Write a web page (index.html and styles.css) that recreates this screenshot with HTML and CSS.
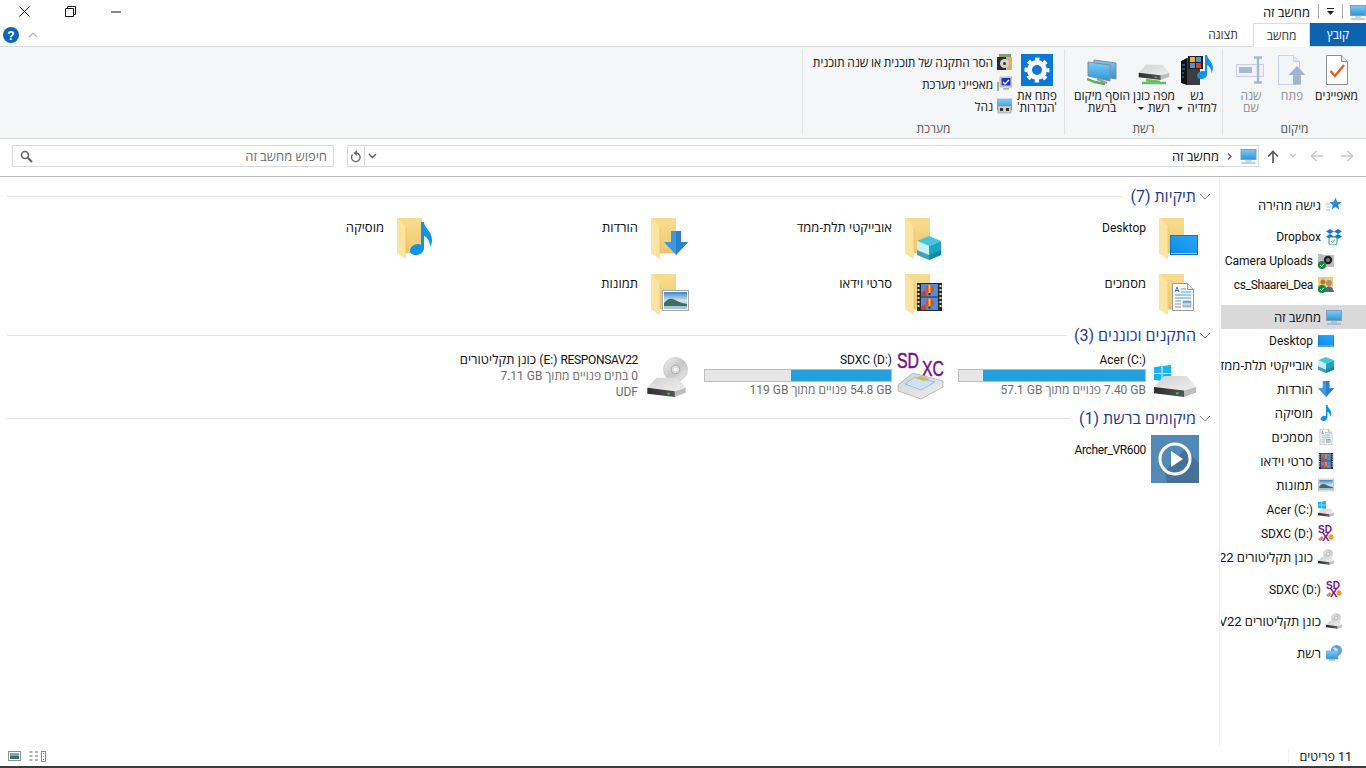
FILE: index.html
```html
<!DOCTYPE html>
<html lang="he" dir="rtl">
<head>
  <meta charset="UTF-8">
  <title>מחשב זה</title>
  <link rel="stylesheet" href="styles.css">
</head>
<body>
  <!-- shared icons -->
  <svg class="sprite" width="0" height="0" aria-hidden="true">
    <defs>
      <linearGradient id="g-folder" x1="0" y1="0" x2="0" y2="1"><stop offset="0" stop-color="#f8dd8f"/><stop offset="1" stop-color="#eec76c"/></linearGradient>
      <linearGradient id="g-screen" x1="0" y1="1" x2="1" y2="0"><stop offset="0" stop-color="#0f8be6"/><stop offset="1" stop-color="#27a8fb"/></linearGradient>
      <linearGradient id="g-pic" x1="0" y1="0" x2="0" y2="1"><stop offset="0" stop-color="#3f86c6"/><stop offset=".5" stop-color="#cfe3ef"/><stop offset="1" stop-color="#8fb6cc"/></linearGradient>
      <linearGradient id="g-drive" x1="0" y1="0" x2="1" y2="1"><stop offset="0" stop-color="#d2d2d2"/><stop offset="1" stop-color="#efefef"/></linearGradient>
      <linearGradient id="g-slot" x1="0" y1="0" x2="1" y2="0"><stop offset="0" stop-color="#2e2e2e"/><stop offset="1" stop-color="#555"/></linearGradient>
      <linearGradient id="g-mon" x1="0" y1="0" x2="0" y2="1"><stop offset="0" stop-color="#7ccbf6"/><stop offset="1" stop-color="#2d94d8"/></linearGradient>
      <linearGradient id="g-disc" x1="0" y1="0" x2="1" y2="1"><stop offset="0" stop-color="#f2f2f2"/><stop offset=".5" stop-color="#c7c7c7"/><stop offset="1" stop-color="#e9e9e9"/></linearGradient>
    </defs>
    <symbol id="folder" viewBox="0 0 48 48">
      <rect x="8" y="3" width="25" height="35" fill="url(#g-folder)"/>
      <path d="M8 3v35l9 6V12z" fill="#fde8a6"/>
      <path d="M8 3h1l8 9v32l-9-6z" fill="#fbe3a0"/>
      <path d="M17 12v26h16" fill="none" stroke="#e6bd62" stroke-width=".6"/>
    </symbol>
    <symbol id="i-screen" viewBox="0 0 28 20">
      <rect width="28" height="20" fill="#0b76c8"/>
      <rect x="1" y="1" width="26" height="17" fill="url(#g-screen)"/>
      <path d="M1 18h26v1H1z" fill="#e4f3ff" opacity=".7"/>
    </symbol>
    <symbol id="i-cube" viewBox="0 0 24 24">
      <path d="M12 0l12 5-12 5L0 5z" fill="#46c6dc"/>
      <path d="M0 5l12 5v14L0 19z" fill="#c9f0f4"/>
      <path d="M24 5l-12 5v14l12-5z" fill="#1ba6c2"/>
      <path d="M0 14l12 5 12-5v5l-12 5-12-5z" fill="#0e7f99" opacity=".7"/>
    </symbol>
    <symbol id="i-arrow" viewBox="0 0 24 24">
      <path d="M7 0h10v11h7L12 24 0 11h7z" fill="#3d97e4"/>
      <path d="M12 24L24 11h-7V0h-5z" fill="#2a80cd"/>
    </symbol>
    <symbol id="i-note" viewBox="0 0 22 33">
      <path d="M11 0h3c0 6 8 9 8 18 0 3-1 5-2 7 0-6-3-10-6-11v12c0 4-4 7-8 7-4 0-6-2-6-4 0-4 4-7 8-7 1 0 2 0 3 1z" fill="#0f95e6"/>
    </symbol>
    <symbol id="i-doc" viewBox="0 0 22 28">
      <path d="M.5.5h15l6 6v21H.5z" fill="#fff" stroke="#9b9b9b"/>
      <path d="M15.500.500v6h6" fill="#e8e8e8" stroke="#9b9b9b"/>
      <path d="M3 9l2-5 2 5M4 7.500h2" fill="none" stroke="#2b7cd3"/>
      <path d="M9 6h5M9 9h10M3 12h16M3 15h16" stroke="#3f9ae0"/>
      <path d="M3 18h6M3 21h6M3 24h6" stroke="#8d8d8d"/>
      <rect x="11" y="18" width="8" height="6" fill="url(#g-pic)" stroke="#999" stroke-width=".6"/>
    </symbol>
    <symbol id="i-film" viewBox="0 0 25 28">
      <rect width="25" height="28" fill="#2a2a2a"/>
      <path d="M1.500 2v24M23.500 2v24" stroke="#ddd" stroke-width="2" stroke-dasharray="2 2"/>
      <rect x="4" y="1" width="17" height="12.500" fill="#4c8fe0"/>
      <rect x="4" y="14.500" width="17" height="12.500" fill="#4c8fe0"/>
      <circle cx="12.500" cy="6" r="4" fill="#e2462e"/><path d="M12.500 2v8" stroke="#f6c42b" stroke-width="2"/>
      <path d="M11.500 10h2v2h-2z" fill="#3a2a1a"/>
      <circle cx="12.500" cy="19.500" r="4" fill="#e2462e"/><path d="M12.500 15.500v8" stroke="#f6c42b" stroke-width="2"/>
      <path d="M11.500 23.500h2v2h-2z" fill="#3a2a1a"/>
      <path d="M4 10l4-3 2 6H4zM4 24l4-3 2 6H4z" fill="#c9402f"/>
    </symbol>
    <symbol id="i-pic" viewBox="0 0 27 21">
      <rect x=".5" y=".5" width="26" height="20" fill="#fff" stroke="#a8a8a8"/>
      <rect x="2" y="2" width="23" height="17" fill="url(#g-pic)"/>
      <path d="M2 13c3-4 6-5 9-4s5 3 9 4l5 1v2H2z" fill="#3f6e60"/>
      <path d="M2 16h23v3H2z" fill="#a6c5d6"/>
    </symbol>
    <symbol id="drive" viewBox="0 0 46 24">
      <path d="M0 13L11 1h25l10 12-13 4z" fill="url(#g-drive)"/>
      <path d="M33 17l13-4v6l-13 5z" fill="#bdbdbd"/>
      <path d="M0 13l33 4v7L0 20z" fill="url(#g-slot)"/>
      <rect x="24" y="19" width="3" height="2" fill="#35d457"/>
    </symbol>
    <symbol id="winlogo" viewBox="0 0 18 18">
      <path d="M0 2.500l8-1.500v7.500H0zM9 1l9-1v8.500H9zM0 9.500h8V17l-8-1.200zM9 9.500h9V18l-9-1z" fill="#19b4f0"/>
    </symbol>
    <symbol id="disc" viewBox="0 0 26 26">
      <circle cx="13" cy="13" r="12.500" fill="url(#g-disc)" stroke="#b5b5b5" stroke-width=".5"/>
      <circle cx="13" cy="13" r="4.500" fill="#dcdcdc" stroke="#a9a9a9"/>
      <circle cx="13" cy="13" r="1.800" fill="#fff"/>
    </symbol>
    <symbol id="monitor" viewBox="0 0 16 16">
      <rect x=".5" y="1.500" width="15" height="10" fill="url(#g-mon)" stroke="#7f9fb8"/>
      <path d="M5 12.500h6v1H5z" fill="#9aa7b1"/>
      <path d="M1 14.500h14v1H1z" fill="#7f9fb8"/>
    </symbol>
    <symbol id="badge" viewBox="0 0 8 8">
      <circle cx="4" cy="4" r="4" fill="#0c8a43"/>
      <path d="M2 4l1.500 1.500L6 2.800" fill="none" stroke="#fff"/>
    </symbol>
    <symbol id="disc-drive-small" viewBox="0 0 16 16">
      <use href="#disc" x="5" y="0" width="10" height="10"/>
      <use href="#drive" x="0" y="7" width="16" height="9"/>
    </symbol>
  </svg>

  <div class="titlebar">
    <svg class="title-icon" width="16" height="16"><use href="#monitor"/></svg>
    <span class="title-sep"></span>
    <svg class="title-menu" width="9" height="8" viewBox="0 0 9 8"><path d="M1 0h7v1H1zM1 3h7L4.500 7z" fill="#222"/></svg>
    <span class="title-sep"></span>
    <span class="title-text">מחשב זה</span>
    <div class="win-controls">
      <button class="win-btn" type="button"><svg width="11" height="2" viewBox="0 0 11 2"><path d="M0 1h10" stroke="#111"/></svg></button>
      <button class="win-btn" type="button"><svg width="11" height="11" viewBox="0 0 11 11"><path d="M2.500 2.500V.5h8v8h-2M.5 2.500h8v8h-8z" fill="none" stroke="#111"/></svg></button>
      <button class="win-btn" type="button"><svg width="11" height="11" viewBox="0 0 11 11"><path d="M.5.500l10 10M10.500.500l-10 10" stroke="#111"/></svg></button>
    </div>
  </div>

  <div class="tabs">
    <div class="tab tab-file">קובץ</div>
    <div class="tab tab-active">מחשב</div>
    <div class="tab">תצוגה</div>
    <div class="tabs-end">
      <svg width="10" height="6" viewBox="0 0 10 6"><path d="M1 5l4-4 4 4" fill="none" stroke="#b5b5b5" stroke-width="1.200"/></svg>
      <svg class="help" width="16" height="16" viewBox="0 0 16 16"><circle cx="8" cy="8" r="8" fill="#0f66b5"/><text x="8" y="12.500" class="help-mark">?</text></svg>
    </div>
  </div>

  <section class="ribbon">
    <div class="group group-location">
      <div class="group-tools">
        <div class="tool tool-props">
          <svg width="22" height="30" viewBox="0 0 22 30"><path d="M.5.500h15l6 6v23H.5z" fill="#fff" stroke="#8e8e8e"/><path d="M15.500.500v6h6" fill="#eee" stroke="#8e8e8e"/><path d="M4.500 16l4.500 5 9-11" fill="none" stroke="#ee5a1e" stroke-width="2.400"/></svg>
          <span>מאפיינים</span>
        </div>
        <div class="tool tool-open is-off">
          <svg width="28" height="30" viewBox="0 0 28 30"><path d="M.5.500h15l6 6v23H.5z" fill="#f2f6fb" stroke="#c8d4e4"/><path d="M15.500.500v6h6" fill="#dfe7f1" stroke="#c8d4e4"/><path d="M19 11l8.500 9H23v9.500h-8V20h-4.500z" fill="#a4b5cc"/></svg>
          <span>פתח</span>
        </div>
        <div class="tool tool-rename is-off">
          <svg width="30" height="30" viewBox="0 0 30 30"><rect x=".5" y="9.500" width="27" height="12" fill="#eef2f7" stroke="#c8d2df"/><rect x="3" y="12" width="13" height="6" fill="#a9bad0"/><path d="M18 2.500h8M18 27.500h8M22 3v24" stroke="#a9bad0" stroke-width="2.400"/></svg>
          <span>שנה<br>שם</span>
        </div>
      </div>
      <div class="group-label">מיקום</div>
    </div>

    <div class="group group-network">
      <div class="group-tools">
        <div class="tool tool-media">
          <svg width="32" height="30" viewBox="0 0 32 30"><path d="M0 6l6-3v27l-6-2z" fill="#111"/><path d="M6 3l13 2v25H6z" fill="#3a3d42"/><path d="M1 10h3M1 14h3M1 18h2M1 22h2" stroke="#2d90e0"/><rect x="7" y="1" width="15" height="13" fill="#222"/><rect x="9" y="2" width="5" height="5" fill="#e8b531"/><rect x="15" y="2" width="5" height="5" fill="#4f94db"/><rect x="9" y="8" width="5" height="5" fill="#4f94db"/><rect x="15" y="8" width="5" height="5" fill="#d9432e"/><use href="#i-note" x="16" y="0" width="16" height="24"/></svg>
          <span>גש<br>למדיה<i class="caret"></i></span>
        </div>
        <div class="tool tool-map">
          <svg width="32" height="30" viewBox="0 0 32 30"><use href="#drive" x="0" y="9" width="32" height="16"/><path d="M8 25l14 2M4 28h24" stroke="#63c063" stroke-width="2.400"/></svg>
          <span>מפה כונן<br>רשת<i class="caret"></i></span>
        </div>
        <div class="tool tool-add">
          <svg width="30" height="30" viewBox="0 0 30 30"><path d="M7 5l22 3v16L7 20z" fill="url(#g-mon)" stroke="#7c8e9b"/><path d="M1 7l22 3v16L1 21z" fill="url(#g-mon)" stroke="#7c8e9b"/><path d="M0 24l8 3 10 2" stroke="#4eb54e" stroke-width="2.400" fill="none"/><path d="M10 24l10 4" stroke="#9a9a9a" stroke-width="2"/></svg>
          <span>הוסף מיקום<br>ברשת</span>
        </div>
      </div>
      <div class="group-label">רשת</div>
    </div>

    <div class="group group-system">
      <div class="group-tools">
        <div class="tool tool-settings">
          <svg width="32" height="32" viewBox="0 0 32 32"><rect width="32" height="32" fill="#0a78d7"/><circle cx="16" cy="16" r="7.500" fill="none" stroke="#fff" stroke-width="5"/><circle cx="16" cy="16" r="11" fill="none" stroke="#fff" stroke-width="3" stroke-dasharray="4.320 4.320" stroke-dashoffset="2.160"/></svg>
          <span>פתח את<br>'הגדרות'</span>
        </div>
        <ul class="small-tools">
          <li>
            <svg width="15" height="16" viewBox="0 0 15 16"><rect x="2" y="0" width="12" height="4" fill="#8a9a78"/><rect y="3" width="15" height="13" fill="#2b2b2b"/><rect x="9" y="3" width="6" height="13" fill="#d8b26a"/><circle cx="7.500" cy="9.500" r="4.500" fill="#d5d5d5"/><circle cx="7.500" cy="9.500" r="1.500" fill="#333"/></svg>
            <span>הסר התקנה של תוכנית או שנה תוכנית</span>
          </li>
          <li>
            <svg width="15" height="16" viewBox="0 0 15 16"><rect x="3" y="1" width="12" height="10" fill="#ddd" stroke="#999" stroke-width=".6"/><rect x="4.500" y="2" width="9" height="7.500" fill="#1f35c9"/><path d="M6 6l2 2 4-4" fill="none" stroke="#fff" stroke-width="1.300"/><rect y="6" width="2" height="9" fill="#9bb18a"/><path d="M6 12h6v1.500H6z" fill="#aaa"/></svg>
            <span>מאפייני מערכת</span>
          </li>
          <li>
            <svg width="15" height="16" viewBox="0 0 15 16"><rect y="1" width="15" height="11" fill="url(#g-mon)" stroke="#8caabd" stroke-width=".6"/><rect x="1" y="8" width="13" height="7" fill="#cfcfcf" stroke="#888" stroke-width=".5"/><rect x="3" y="10" width="3" height="3" fill="#333"/><rect x="9" y="10" width="3" height="3" fill="#333"/></svg>
            <span>נהל</span>
          </li>
        </ul>
      </div>
      <div class="group-label">מערכת</div>
    </div>
  </section>

  <div class="addressbar">
    <div class="nav-arrows">
      <svg width="14" height="12" viewBox="0 0 14 12"><path d="M1 6h11M7.500 1l5 5-5 5" fill="none" stroke="#c9c9c9" stroke-width="1.600"/></svg>
      <svg class="nav-back" width="14" height="12" viewBox="0 0 14 12"><path d="M13 6H2M6.500 1l-5 5 5 5" fill="none" stroke="#c9c9c9" stroke-width="1.600"/></svg>
      <svg class="nav-recent" width="8" height="6" viewBox="0 0 8 6"><path d="M1 1l3 3 3-3" fill="none" stroke="#c9c9c9" stroke-width="1.200"/></svg>
      <svg class="nav-up" width="12" height="13" viewBox="0 0 12 13"><path d="M6 13V2M1 6.500L6 1.500l5 5" fill="none" stroke="#5c5c5c" stroke-width="1.700"/></svg>
    </div>
    <div class="address">
      <svg class="address-pc" width="17" height="16"><use href="#monitor"/></svg>
      <svg class="address-chevron" width="5" height="7" viewBox="0 0 5 7"><path d="M1 .5l3 3-3 3" fill="none" stroke="#555" stroke-width="1.200"/></svg>
      <span class="crumb">מחשב זה</span>
      <div class="address-end">
        <span class="address-drop"><svg width="9" height="6" viewBox="0 0 9 6"><path d="M1 1l3.500 3.500L8 1" fill="none" stroke="#555" stroke-width="1.400"/></svg></span>
        <span class="address-refresh"><svg width="12" height="13" viewBox="0 0 12 13"><path d="M2.500 4.500A4.300 4.300 0 1 0 6.500 3H4.800M7 .6L4.600 3 7 5.400" fill="none" stroke="#666" stroke-width="1.300"/></svg></span>
      </div>
    </div>
    <div class="search">
      <span>חיפוש מחשב זה</span>
      <svg width="13" height="13" viewBox="0 0 13 13"><circle cx="5" cy="5" r="3.500" fill="none" stroke="#666" stroke-width="1.600"/><path d="M7.800 7.800L12 12" stroke="#666" stroke-width="2.200"/></svg>
    </div>
  </div>

  <div class="explorer">
    <aside class="navpane">
      <div class="nav-list">
        <div class="nav-row"><svg width="16" height="16" viewBox="0 0 16 16"><path d="M9.500.5l1.700 4.200 4.500.3-3.500 3 1.100 4.500-3.800-2.400-3.800 2.400L6.800 8 3.300 5l4.500-.3z" fill="#2a8ad4"/><path d="M0 7h4M1 10h4M0 13h4" stroke="#8cc3ea"/></svg><span>גישה מהירה</span></div>
        <div class="nav-gap"></div>
        <div class="nav-row"><svg width="16" height="16" viewBox="0 0 16 16"><path d="M4 0l4 2.500L4 5 0 2.500zM12 0l4 2.500L12 5 8 2.500zM4 5l4 2.500L4 10 0 7.500zM12 5l4 2.500L12 10 8 7.500z" fill="#1c74d6"/><rect x="3" y="8" width="8" height="8" rx="2" fill="#fff" stroke="#2e9a5e"/><path d="M5 12l1.500 1.500L9 10.500" fill="none" stroke="#2e9a5e"/></svg><span class="lat">Dropbox</span></div>
        <div class="nav-row nav-sub"><svg width="16" height="16" viewBox="0 0 16 16"><path d="M0 1h4l1 1h11v12H0z" fill="#bdbdbd"/><circle cx="10" cy="7" r="4.200" fill="#222"/><circle cx="10" cy="7" r="2" fill="#6f7f8e"/><use href="#badge" x="0" y="8" width="8" height="8"/></svg><span class="lat">Camera Uploads</span></div>
        <div class="nav-row nav-sub"><svg width="16" height="16" viewBox="0 0 16 16"><rect y="0" width="15" height="15" fill="#f0cf72"/><circle cx="5" cy="5" r="2.500" fill="#a57c52"/><circle cx="11" cy="6" r="3" fill="#b78a68"/><path d="M7 15c0-4 2-5.500 4-5.500s4 1.500 5 5.500z" fill="#4a6b8c"/><use href="#badge" x="0" y="8" width="8" height="8"/></svg><span class="lat lat-tight">cs_Shaarei_Dea</span></div>
        <div class="nav-gap"></div>
        <div class="nav-row is-selected"><svg width="16" height="16"><use href="#monitor"/></svg><span>מחשב זה</span></div>
        <div class="nav-row nav-sub"><svg width="16" height="16"><use href="#i-screen"/></svg><span class="lat">Desktop</span></div>
        <div class="nav-row nav-sub"><svg width="16" height="16"><use href="#i-cube"/></svg><span>אובייקטי תלת-ממד</span></div>
        <div class="nav-row nav-sub"><svg width="16" height="16"><use href="#i-arrow"/></svg><span>הורדות</span></div>
        <div class="nav-row nav-sub"><svg width="16" height="16"><use href="#i-note"/></svg><span>מוסיקה</span></div>
        <div class="nav-row nav-sub"><svg width="16" height="16"><use href="#i-doc"/></svg><span>מסמכים</span></div>
        <div class="nav-row nav-sub"><svg width="16" height="16"><use href="#i-film"/></svg><span>סרטי וידאו</span></div>
        <div class="nav-row nav-sub"><svg width="16" height="16"><use href="#i-pic"/></svg><span>תמונות</span></div>
        <div class="nav-row nav-sub"><svg width="16" height="16" viewBox="0 0 16 16"><use href="#winlogo" x="0" y="0" width="8" height="8"/><use href="#drive" x="0" y="7" width="16" height="9"/></svg><span><bdi>Acer (C:)</bdi></span></div>
        <div class="nav-row nav-sub"><svg width="16" height="18" viewBox="0 0 16 18"><text x="0" y="9" class="sd-mini" textLength="14" lengthAdjust="spacingAndGlyphs">SD</text><text x="4" y="17" class="sd-mini">X</text><path d="M0 15l4-3 2 3-4 2z" fill="#a9a26a"/><path d="M13 10v6M10 13h6M11 11l4 4M15 11l-4 4" stroke="#f39426" stroke-width="1.200"/></svg><span><bdi>SDXC (D:)</bdi></span></div>
        <div class="nav-row nav-sub"><svg width="16" height="16"><use href="#disc-drive-small"/></svg><span>כונן תקליטורים RESPONSAV22</span></div>
        <div class="nav-gap"></div>
        <div class="nav-row"><svg width="16" height="18" viewBox="0 0 16 18"><text x="0" y="9" class="sd-mini" textLength="14" lengthAdjust="spacingAndGlyphs">SD</text><text x="4" y="17" class="sd-mini">X</text><path d="M0 15l4-3 2 3-4 2z" fill="#a9a26a"/><path d="M13 10v6M10 13h6M11 11l4 4M15 11l-4 4" stroke="#f39426" stroke-width="1.200"/></svg><span><bdi>SDXC (D:)</bdi></span></div>
        <div class="nav-gap"></div>
        <div class="nav-row"><svg width="16" height="16"><use href="#disc-drive-small"/></svg><span>כונן תקליטורים RESPONSAV22</span></div>
        <div class="nav-gap"></div>
        <div class="nav-row"><svg width="16" height="16" viewBox="0 0 16 16"><circle cx="10.500" cy="5.500" r="5.500" fill="#5ba3dc"/><path d="M7 3c2-1 4 0 5 2s-1 3-3 2z" fill="#cfe6f7"/><rect x="0" y="6" width="12" height="8" fill="url(#g-mon)" stroke="#7f9fb8" stroke-width=".6"/><path d="M3 15h6" stroke="#7f9fb8"/></svg><span>רשת</span></div>
      </div>
    </aside>

    <main class="content">
      <div class="group-head">
        <svg width="12" height="7" viewBox="0 0 12 7"><path d="M1 1l5 5 5-5" fill="none" stroke="#8a8a8a"/></svg>
        <h2>תיקיות (7)</h2>
        <span class="head-line"></span>
      </div>
      <div class="tiles">
        <div class="tile"><svg width="48" height="48" viewBox="0 0 48 48"><use href="#folder"/><use href="#i-screen" x="19" y="20" width="28" height="20"/></svg><span class="tile-name lat">Desktop</span></div>
        <div class="tile"><svg width="48" height="48" viewBox="0 0 48 48"><use href="#folder"/><use href="#i-cube" x="20" y="21" width="24" height="24"/></svg><span class="tile-name">אובייקטי תלת-ממד</span></div>
        <div class="tile"><svg width="48" height="48" viewBox="0 0 48 48"><use href="#folder"/><use href="#i-arrow" x="21" y="16" width="24" height="24"/></svg><span class="tile-name">הורדות</span></div>
        <div class="tile"><svg width="48" height="48" viewBox="0 0 48 48"><use href="#folder"/><use href="#i-note" x="21" y="7" width="22" height="33"/></svg><span class="tile-name">מוסיקה</span></div>
        <div class="tile"><svg width="48" height="48" viewBox="0 0 48 48"><use href="#folder"/><use href="#i-doc" x="21" y="12" width="22" height="28"/></svg><span class="tile-name">מסמכים</span></div>
        <div class="tile"><svg width="48" height="48" viewBox="0 0 48 48"><use href="#folder"/><use href="#i-film" x="20" y="12" width="25" height="28"/></svg><span class="tile-name">סרטי וידאו</span></div>
        <div class="tile"><svg width="48" height="48" viewBox="0 0 48 48"><use href="#folder"/><use href="#i-pic" x="19" y="19" width="27" height="21"/></svg><span class="tile-name">תמונות</span></div>
      </div>

      <div class="group-head head-devices">
        <svg width="12" height="7" viewBox="0 0 12 7"><path d="M1 1l5 5 5-5" fill="none" stroke="#8a8a8a"/></svg>
        <h2>התקנים וכוננים (3)</h2>
        <span class="head-line"></span>
      </div>
      <div class="tiles tiles-drives">
        <div class="tile">
          <svg width="48" height="48" viewBox="0 0 48 48"><use href="#winlogo" x="3" y="16" width="17" height="17"/><use href="#drive" x="3" y="26" width="42" height="22"/></svg>
          <div class="drive-info">
            <div class="drive-name"><bdi>Acer (C:)</bdi></div>
            <div class="bar"><div class="bar-fill" style="width: 87%"></div></div>
            <div class="drive-sub"><bdi>7.40 GB</bdi> פנויים מתוך <bdi>57.1 GB</bdi></div>
          </div>
        </div>
        <div class="tile">
          <svg class="sd-icon" width="48" height="48" viewBox="0 0 48 48"><text x="0" y="19" class="sd-big" textLength="22" lengthAdjust="spacingAndGlyphs">SD</text><text x="25" y="27" class="sd-big" textLength="22" lengthAdjust="spacingAndGlyphs">XC</text><path d="M1 36l15-12 30 8v6L24 50 1 42z" fill="url(#g-drive)" stroke="#a5a5a5" stroke-width=".7"/><path d="M8 35l10-7 20 5-14 8z" fill="#cfe2f3" stroke="#7ba5c9" stroke-width=".6"/><path d="M18 29l6-2 9 3-6 2z" fill="#c7ba6e"/></svg>
          <div class="drive-info">
            <div class="drive-name"><bdi>SDXC (D:)</bdi></div>
            <div class="bar"><div class="bar-fill" style="width: 54%"></div></div>
            <div class="drive-sub"><bdi>54.8 GB</bdi> פנויים מתוך <bdi>119 GB</bdi></div>
          </div>
        </div>
        <div class="tile">
          <svg width="48" height="48" viewBox="0 0 48 48"><use href="#disc" x="20" y="8" width="25" height="25"/><use href="#drive" x="2" y="28" width="43" height="20"/></svg>
          <div class="drive-info">
            <div class="drive-name"><bdi class="lat-tight">RESPONSAV22</bdi> <bdi>(E:)</bdi> כונן תקליטורים</div>
            <div class="drive-sub">0 בתים פנויים מתוך <bdi>7.11 GB</bdi></div>
            <div class="drive-sub">UDF</div>
          </div>
        </div>
      </div>

      <div class="group-head head-network">
        <svg width="12" height="7" viewBox="0 0 12 7"><path d="M1 1l5 5 5-5" fill="none" stroke="#8a8a8a"/></svg>
        <h2>מיקומים ברשת (1)</h2>
        <span class="head-line"></span>
      </div>
      <div class="tiles tiles-net">
        <div class="tile">
          <svg width="48" height="48" viewBox="0 0 48 48"><rect width="48" height="48" fill="#5389b6"/><path d="M48 48H16L14 36l20-22 14 14z" fill="#467097"/><circle cx="24" cy="24" r="15" fill="none" stroke="#fff" stroke-width="3"/><path d="M20 16l12 8-12 8z" fill="#fff"/></svg>
          <span class="tile-name lat lat-tight">Archer_VR600</span>
        </div>
      </div>
    </main>
  </div>

  <footer class="statusbar">
    <span class="status-count">11 פריטים</span>
    <span class="status-sep"></span>
    <div class="view-btns">
      <svg width="17" height="11" viewBox="0 0 17 11"><path d="M.5 5h3M.5 1h3M.5 9h3M6 1h3M6 5h3M6 9h3" stroke="#666"/><rect x="12.500" y=".5" width="4" height="10" fill="#fff" stroke="#888"/><path d="M14 2h1v1h-1z" fill="#4a90d9"/><path d="M14 5h1v1h-1z" fill="#49b35f"/><path d="M14 8h1v1h-1z" fill="#d9534a"/></svg>
      <svg width="13" height="10" viewBox="0 0 13 10"><rect x=".5" y=".5" width="12" height="9" fill="#fff" stroke="#8e8e8e"/><rect x="2" y="2" width="9" height="3" fill="#6fa6d4"/><rect x="2" y="5" width="9" height="3" fill="#3f6e60"/></svg>
    </div>
  </footer>
  <div class="bottom-strip"></div>
</body>
</html>
```

FILE: styles.css
```css
* {
  box-sizing: border-box;
}

html, body {
  height: 100%;
}

body {
  margin: 0;
  display: flex;
  flex-direction: column;
  height: 768px;
  overflow: hidden;
  background: white;
  color: #111;
  font-family: Roboto, "Open Sans", "Liberation Sans", sans-serif;
  font-size: 12px;
}

svg {
  display: block;
  flex: none;
}

.sprite {
  flex: none;
}

.sd-icon {
  overflow: visible;
}

.sd-mini {
  font: bold 11px "Liberation Sans", sans-serif;
  fill: #7b1488;
  direction: ltr;
}

.help-mark {
  font: bold 12px "Liberation Sans", sans-serif;
  fill: white;
  text-anchor: middle;
}

.sd-big {
  font: 22px "Liberation Sans", sans-serif;
  fill: #7b0f86;
  stroke: #7b0f86;
  stroke-width: 0.5px;
  direction: ltr;
}

/* latin labels run a little smaller than the hebrew ones */
.lat,
bdi {
  font-size: 12px;
}

.lat-tight {
  letter-spacing: -0.35px;
}

/* title bar */
.titlebar {
  display: flex;
  align-items: center;
  height: 23px;
  flex: none;
}

.title-sep {
  width: 1px;
  height: 15px;
  background: #a8a8a8;
  margin: 0 7px;
}

.title-text {
  padding-right: 1px;
  font-size: 13px;
}

.win-controls {
  display: flex;
  gap: 1px;
  margin-right: auto;
  padding-left: 2px;
}

.win-btn {
  width: 45px;
  height: 20px;
  border: 0;
  padding: 0;
  background: none;
  display: flex;
  align-items: center;
  justify-content: center;
}

/* tabs */
.tabs {
  display: flex;
  height: 23px;
  flex: none;
  position: relative;
  z-index: 1;
}

.tab {
  width: 60px;
  display: flex;
  align-items: center;
  justify-content: center;
  color: #333;
}

.tab-file {
  width: 56px;
  background: #0e63b0;
  color: white;
}

.tab-active {
  width: 57px;
  height: 24px;
  background: white;
  border: 1px solid #dadbdc;
  border-bottom: 0;
}

.tabs-end {
  display: flex;
  align-items: center;
  gap: 9px;
  margin-right: auto;
  padding-left: 3px;
}

/* ribbon */
.ribbon {
  display: flex;
  flex: none;
  height: 93px;
  padding: 2px 0 2px;
  background: #f5f6f7;
  border-top: 1px solid #dadbdc;
  border-bottom: 1px solid #dadbdc;
}

.group {
  display: flex;
  flex-direction: column;
  height: 86px;
  border-left: 1px solid #e1e3e6;
}

.group-location {
  width: 144px;
}

.group-network {
  width: 158px;
}

.group-system {
  width: 262px;
}

.group-tools {
  flex: 1;
  display: flex;
  padding: 5px 4px 0 0;
}

.group-location .group-tools {
  padding-right: 5px;
}

.group-label {
  height: 12px;
  line-height: 12px;
  text-align: center;
  color: #555;
}

.tool {
  display: flex;
  flex-direction: column;
  align-items: center;
  line-height: 12px;
  text-align: center;
  white-space: nowrap;
}

.tool svg {
  height: 32px;
  margin-bottom: 4px;
}

.tool.is-off {
  color: #8b8f94;
}

.tool-props { width: 49px; }
.tool-open { width: 40px; }
.tool-rename { width: 42px; }
.tool-media { width: 42px; }
.tool-map { width: 44px; }
.tool-add { width: 60px; }
.tool-settings { width: 46px; }

.caret {
  display: inline-block;
  border: 3px solid transparent;
  border-top: 3px solid #222;
  border-bottom: 0;
  margin-right: 4px;
  vertical-align: 2px;
}

.small-tools {
  list-style: none;
  margin: -3px 2px 0 0;
  padding: 0;
  letter-spacing: -0.1px;
}

.small-tools li {
  display: flex;
  align-items: center;
  gap: 4px;
  height: 22px;
}

/* address bar */
.addressbar {
  display: flex;
  flex: none;
  align-items: flex-start;
  height: 38px;
  padding-top: 6px;
  border-bottom: 1px solid #bcbcbc;
  font-size: 13px;
}

.nav-arrows {
  display: flex;
  align-items: center;
  width: 107px;
  height: 22px;
  padding-right: 12px;
}

.nav-back {
  margin-right: 16px;
}

.nav-recent {
  margin-right: 13px;
}

.nav-up {
  margin-right: 10px;
}

.address {
  display: flex;
  align-items: center;
  width: 912px;
  height: 22px;
  border: 1px solid #d9d9d9;
  padding-right: 1px;
}

.address-chevron {
  margin: 0 8px;
}

.address-end {
  display: flex;
  align-items: center;
  height: 100%;
  margin-right: auto;
}

.address-drop {
  width: 15px;
  display: flex;
  justify-content: center;
}

.address-refresh {
  display: flex;
  align-items: center;
  justify-content: center;
  width: 17px;
  height: 20px;
  border-right: 1px solid #d9d9d9;
}

.search {
  display: flex;
  align-items: center;
  justify-content: space-between;
  width: 322px;
  height: 22px;
  margin-right: 13px;
  border: 1px solid #d9d9d9;
  padding: 0 6px 0 7px;
  color: #6d6d6d;
}

/* main area */
.explorer {
  flex: 1;
  display: flex;
  min-height: 0;
  font-size: 13px;
}

.navpane {
  flex: none;
  width: 147px;
  padding-left: 1px;
  border-left: 1px solid #efefef;
}

.nav-list {
  overflow: hidden;
  padding-top: 16px;
}

.nav-gap {
  height: 8px;
}

.nav-row {
  display: flex;
  align-items: center;
  gap: 5px;
  height: 24px;
  padding-right: 24px;
  white-space: nowrap;
}

.nav-row span {
  flex: none;
}

.nav-sub {
  padding-right: 32px;
}

.is-selected {
  background: #d9d9d9;
}

.content {
  flex: 1;
  min-width: 0;
  padding: 10px 8px 0 7px;
}

.group-head {
  display: flex;
  align-items: center;
  height: 18px;
}

.group-head svg {
  margin-left: 3px;
}

.group-head h2 {
  margin: 0;
  font-size: 16px;
  font-weight: normal;
  color: #1e3a8f;
  white-space: nowrap;
}

.head-line {
  flex: 1;
  height: 1px;
  margin-right: 8px;
  background: #e2e2e2;
}

.head-devices {
  margin-top: 7px;
}

.head-network {
  margin-top: 9px;
}

.tiles {
  display: grid;
  grid-template-columns: repeat(4, 254px);
  grid-auto-rows: 48px;
  row-gap: 8px;
  margin: 10px 12px 0 0;
}

.tiles-drives {
  grid-auto-rows: 51px;
  margin-top: 5px;
}

.tiles-net {
  margin-top: 8px;
}

.tile {
  display: flex;
  gap: 5px;
}

.tile-name {
  padding-top: 5px;
  line-height: 16px;
  white-space: nowrap;
}

.tiles-net .tile-name {
  padding-top: 7px;
}

.drive-info {
  width: 188px;
  padding-top: 3px;
  line-height: 16px;
  white-space: nowrap;
}

.drive-sub {
  font-size: 12px;
  color: #6d6d6d;
}

.bar {
  height: 13px;
  margin-top: 1px;
  background: #e6e6e6;
  border: 1px solid #bcbcbc;
}

.bar-fill {
  height: 100%;
  background: #26a0da;
}

/* status bar */
.statusbar {
  display: flex;
  flex: none;
  align-items: center;
  height: 20px;
  padding-right: 14px;
  font-size: 12.5px;
}

.status-sep {
  width: 1px;
  height: 14px;
  margin-right: 11px;
  background: #efefef;
}

.view-btns {
  display: flex;
  align-items: center;
  gap: 8px;
  margin-right: auto;
  padding-left: 8px;
}

.bottom-strip {
  flex: none;
  height: 2px;
  background: #3b3b3b;
}
```
